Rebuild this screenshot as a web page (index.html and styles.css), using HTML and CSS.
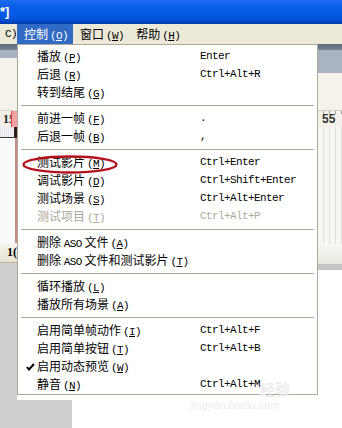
FILE: index.html
```html
<!DOCTYPE html>
<html lang="zh-CN">
<head>
    <meta charset="UTF-8">
    <title>控制菜单</title>
    <link rel="stylesheet" href="styles.css">
</head>
<body>
    <div class="screen">
        <div class="titlebar"><span class="title">*]</span></div>

        <div class="menubar">
            <span class="mi cut">C)</span>
            <span class="mi active">控制<span class="mn">(<u>O</u>)</span></span>
            <span class="mi">窗口<span class="mn">(<u>W</u>)</span></span>
            <span class="mi">帮助<span class="mn">(<u>H</u>)</span></span>
        </div>

        <div class="workspace">
            <div class="side left">
                <div class="band dark"></div>
                <div class="band slate"></div>
                <div class="band light"></div>
                <div class="ruler"><span class="num">15</span><span class="head"></span></div>
                <div class="frames"></div>
                <div class="track"></div>
                <div class="layerbar"><span class="num">1(</span></div>
                <div class="panel"></div>
            </div>
            <div class="middle">
                <div class="hidden"></div>
                <div class="foot">
                    <div class="foot-gray"></div>
                    <div class="foot-white"></div>
                </div>
            </div>
            <div class="side right">
                <div class="band dark"></div>
                <div class="band slate tall"></div>
                <div class="band light short"></div>
                <div class="ruler ticks"><span class="num">55</span></div>
                <div class="grid"></div>
                <div class="scroll"></div>
                <div class="band gray"></div>
                <div class="blank"></div>
            </div>
        </div>

        <div class="dropdown">
            <div class="item"><span class="check"></span><span class="label">播放<span class="mn">(<u>P</u>)</span></span><span class="key">Enter</span></div>
            <div class="item"><span class="check"></span><span class="label">后退<span class="mn">(<u>R</u>)</span></span><span class="key">Ctrl+Alt+R</span></div>
            <div class="item"><span class="check"></span><span class="label">转到结尾<span class="mn">(<u>G</u>)</span></span><span class="key"></span></div>
            <div class="sep"></div>
            <div class="item"><span class="check"></span><span class="label">前进一帧<span class="mn">(<u>F</u>)</span></span><span class="key">.</span></div>
            <div class="item"><span class="check"></span><span class="label">后退一帧<span class="mn">(<u>B</u>)</span></span><span class="key">,</span></div>
            <div class="sep"></div>
            <div class="item"><span class="check"></span><span class="label">测试影片<span class="mn">(<u>M</u>)</span></span><span class="key">Ctrl+Enter</span></div>
            <div class="item"><span class="check"></span><span class="label">调试影片<span class="mn">(<u>D</u>)</span></span><span class="key">Ctrl+Shift+Enter</span></div>
            <div class="item"><span class="check"></span><span class="label">测试场景<span class="mn">(<u>S</u>)</span></span><span class="key">Ctrl+Alt+Enter</span></div>
            <div class="item disabled"><span class="check"></span><span class="label">测试项目<span class="mn">(<u>T</u>)</span></span><span class="key">Ctrl+Alt+P</span></div>
            <div class="sep"></div>
            <div class="item"><span class="check"></span><span class="label">删除 <span class="lat">ASO</span> 文件<span class="mn">(<u>A</u>)</span></span><span class="key"></span></div>
            <div class="item"><span class="check"></span><span class="label wide">删除 <span class="lat">ASO</span> 文件和测试影片<span class="mn">(<u>T</u>)</span></span></div>
            <div class="sep"></div>
            <div class="item"><span class="check"></span><span class="label">循环播放<span class="mn">(<u>L</u>)</span></span><span class="key"></span></div>
            <div class="item"><span class="check"></span><span class="label">播放所有场景<span class="mn">(<u>A</u>)</span></span><span class="key"></span></div>
            <div class="sep"></div>
            <div class="item"><span class="check"></span><span class="label">启用简单帧动作<span class="mn">(<u>I</u>)</span></span><span class="key">Ctrl+Alt+F</span></div>
            <div class="item"><span class="check"></span><span class="label">启用简单按钮<span class="mn">(<u>T</u>)</span></span><span class="key">Ctrl+Alt+B</span></div>
            <div class="item"><span class="check"><svg width="9" height="8" viewBox="0 0 9 8"><path d="M1 4 L3 6.5 L8 1" fill="none" stroke="#000" stroke-width="2"/></svg></span><span class="label">启用动态预览<span class="mn">(<u>W</u>)</span></span><span class="key"></span></div>
            <div class="item"><span class="check"></span><span class="label">静音<span class="mn">(<u>N</u>)</span></span><span class="key">Ctrl+Alt+M</span></div>
        </div>

        <svg class="ring" width="100" height="22" viewBox="0 0 100 22">
            <ellipse cx="49" cy="10.5" rx="46.5" ry="8" fill="none" stroke="#b3101c" stroke-width="2.4"/>
        </svg>

        <div class="watermark">
            <span class="wm-logo">经验</span>
            <span class="wm-url">jingyan.baidu.com</span>
        </div>
    </div>
</body>
</html>
```

FILE: styles.css
```css
body {
    margin: 0;
    background: #fff;
}
.screen {
    position: relative;
    width: 342px;
    height: 428px;
    overflow: hidden;
    display: flex;
    flex-direction: column;
    font-family: "Noto Sans CJK SC", sans-serif;
    font-size: 12px;
    color: #000;
}

/* title bar */
.titlebar {
    height: 24px;
    flex: none;
    background: linear-gradient(#1d6cf0, #0a5de8 30%, #0557e6 70%, #0448c8 88%, #033ca8);
}
.title {
    display: block;
    padding: 4px 0 0 0;
    color: #fff;
    font-family: "Liberation Sans", sans-serif;
    font-weight: bold;
    font-size: 13px;
    line-height: 16px;
}

/* menu bar */
.menubar {
    height: 20px;
    flex: none;
    display: flex;
    background: #ece9d8;
    line-height: 20px;
}
.mi {
    padding: 0 5px 0 7px;
    white-space: nowrap;
}
.mi.cut {
    width: 17px;
    box-sizing: border-box;
    padding: 0;
    font-family: "Liberation Mono", monospace;
    font-size: 11px;
    letter-spacing: -0.6px;
    text-align: right;
}
.mi.active {
    background: #316ac5;
    color: #fff;
}
.mn {
    margin-left: 2px;
    font-family: "Liberation Mono", monospace;
    font-size: 11px;
    letter-spacing: -0.6px;
}

/* background workspace */
.workspace {
    flex: 1;
    display: flex;
}
.side {
    display: flex;
    flex-direction: column;
}
.side.left {
    width: 17px;
}
.side.right {
    width: 24px;
}
.middle {
    flex: 1;
    display: flex;
    flex-direction: column;
}
.hidden {
    flex: 1;
}
.foot {
    height: 28px;
    display: flex;
}
.foot-gray {
    width: 55px;
    background: #cfcfcf;
}
.foot-white {
    flex: 1;
    background: #fff;
}
.band.dark {
    height: 6px;
    background: linear-gradient(#5c6878, #7a8696);
}
.band.slate {
    height: 8px;
    background: #a9b3c3;
}
.band.slate.tall {
    height: 23px;
}
.band.light {
    height: 52px;
    background: #f4f2ea;
}
.band.light.short {
    height: 37px;
}
.band.gray {
    height: 6px;
    background: #c4c4c4;
}
.ruler {
    position: relative;
    height: 17px;
    background: #f1efe6;
    border-top: 1px solid #d8d4c4;
    box-sizing: border-box;
}
.ruler .num {
    display: block;
    font-family: "Liberation Serif", serif;
    font-weight: bold;
    font-size: 12px;
    line-height: 16px;
    padding-left: 3px;
    color: #222;
}
.ruler.ticks .num {
    padding-left: 4px;
    font-family: "Liberation Sans", sans-serif;
    color: #333;
}
.ruler.ticks {
    background: #f3f1ea linear-gradient(90deg, transparent 5px, #9c9c9c 5px, #9c9c9c 6px, transparent 6px) 0 0 / 6px 3px repeat-x;
}
.ruler .head {
    position: absolute;
    right: 0;
    top: 0;
    width: 5px;
    height: 16px;
    background: #f4a2a2;
    border-left: 1px solid #d44;
}
.frames {
    height: 10px;
    background: repeating-linear-gradient(90deg, #dfe3ec 0 1px, #f7f7f7 1px 2px);
    border-right: 3px solid #2a1a1a;
    border-bottom: 1px solid #3a3a3a;
}
.track {
    flex: 1;
    max-height: 105px;
    background: #fbfafa;
    border-right: 2px solid #c98a8a;
}
.layerbar {
    height: 19px;
    background: linear-gradient(#f6f5ee, #e6e3d3);
    border-bottom: 1px solid #b8b4a4;
}
.layerbar .num {
    display: block;
    text-align: right;
    font-family: "Liberation Serif", serif;
    font-weight: bold;
    font-size: 12px;
    line-height: 19px;
}
.panel {
    flex: 1;
    background: #cfcfcf;
}
.grid {
    height: 117px;
    background: #f7f6f2 linear-gradient(90deg, transparent 5px, #e2e0da 5px, #e2e0da 6px, transparent 6px) 0 0 / 6px 100% repeat-x;
}
.scroll {
    height: 20px;
    background: linear-gradient(#f8f8f4, #e9e7de);
}
.blank {
    flex: 1;
    background: #fff;
}

/* dropdown menu */
.dropdown {
    position: absolute;
    left: 17px;
    top: 44px;
    width: 301px;
    box-sizing: border-box;
    background: #fff;
    border: 1px solid #aca899;
    padding: 2px 0 1px 0;
}
.item {
    display: grid;
    grid-template-columns: 19px 163px 1fr;
    height: 18px;
    line-height: 18px;
    white-space: nowrap;
}
.item .check {
    display: flex;
    align-items: center;
    justify-content: flex-end;
    padding-right: 2px;
}
.label.wide {
    grid-column: 2 / 4;
}
.lat {
    font-family: "Liberation Mono", monospace;
    font-size: 11px;
    letter-spacing: -0.6px;
}
.key {
    font-family: "Liberation Mono", monospace;
    font-size: 11px;
    letter-spacing: -0.6px;
}
.item.disabled {
    color: #aca899;
}
.sep {
    height: 8px;
    display: flex;
    align-items: center;
    padding: 0 3px 0 3px;
}
.sep::before {
    content: "";
    flex: 1;
    border-top: 1px solid #aca899;
}

/* overlays */
.ring {
    position: absolute;
    left: 21px;
    top: 154px;
}
.watermark {
    position: absolute;
    left: 170px;
    top: 380px;
    width: 130px;
    display: flex;
    flex-direction: column;
    align-items: center;
    color: #ececec;
    pointer-events: none;
}
.wm-logo {
    align-self: flex-end;
    padding-right: 10px;
    font-size: 15px;
    font-weight: bold;
    line-height: 18px;
}
.wm-url {
    font-family: "Liberation Sans", sans-serif;
    font-size: 11px;
    line-height: 14px;
}
```
